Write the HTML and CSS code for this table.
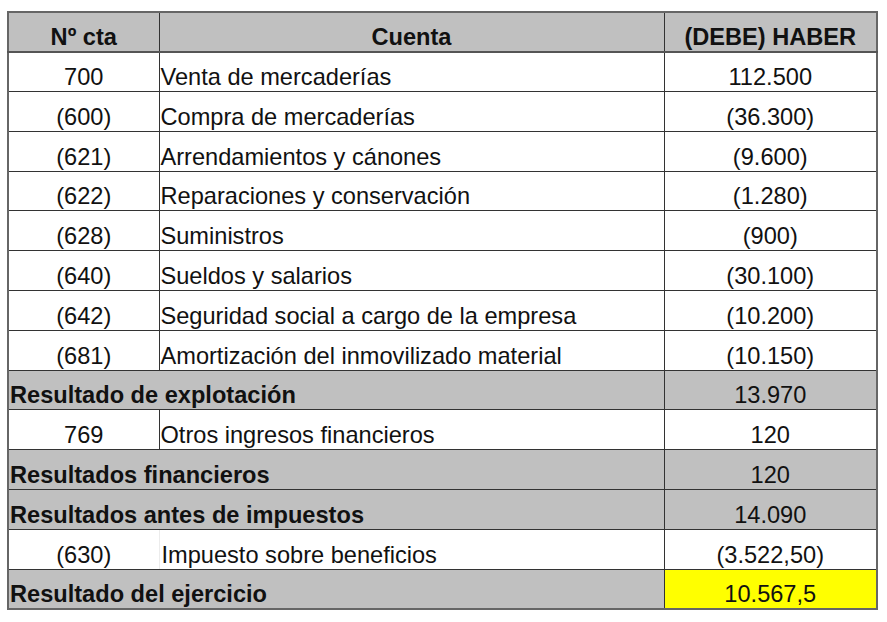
FILE: index.html
```html
<!DOCTYPE html>
<html lang="es">
<head>
<meta charset="utf-8">
<title>Cuenta de resultados</title>
<link rel="stylesheet" href="styles.css">
</head>
<body>
<table class="pyg">
  <colgroup>
    <col class="c-num">
    <col class="c-name">
    <col class="c-val">
  </colgroup>
  <thead>
    <tr class="head">
      <th>Nº cta</th>
      <th>Cuenta</th>
      <th>(DEBE) HABER</th>
    </tr>
  </thead>
  <tbody>
    <tr><td class="num">700</td><td class="name">Venta de mercaderías</td><td class="val">112.500</td></tr>
    <tr><td class="num">(600)</td><td class="name">Compra de mercaderías</td><td class="val">(36.300)</td></tr>
    <tr><td class="num">(621)</td><td class="name">Arrendamientos y cánones</td><td class="val">(9.600)</td></tr>
    <tr><td class="num">(622)</td><td class="name">Reparaciones y conservación</td><td class="val">(1.280)</td></tr>
    <tr><td class="num">(628)</td><td class="name">Suministros</td><td class="val">(900)</td></tr>
    <tr><td class="num">(640)</td><td class="name">Sueldos y salarios</td><td class="val">(30.100)</td></tr>
    <tr><td class="num">(642)</td><td class="name">Seguridad social a cargo de la empresa</td><td class="val">(10.200)</td></tr>
    <tr><td class="num">(681)</td><td class="name">Amortización del inmovilizado material</td><td class="val">(10.150)</td></tr>
    <tr class="total"><td class="label" colspan="2">Resultado de explotación</td><td class="val">13.970</td></tr>
    <tr><td class="num">769</td><td class="name">Otros ingresos financieros</td><td class="val">120</td></tr>
    <tr class="total"><td class="label" colspan="2">Resultados financieros</td><td class="val">120</td></tr>
    <tr class="total"><td class="label" colspan="2">Resultados antes de impuestos</td><td class="val">14.090</td></tr>
    <tr class="open"><td class="num">(630)</td><td class="name">Impuesto sobre beneficios</td><td class="val">(3.522,50)</td></tr>
    <tr class="total"><td class="label" colspan="2">Resultado del ejercicio</td><td class="val highlight">10.567,5</td></tr>
  </tbody>
</table>
</body>
</html>
```

FILE: styles.css
```css
html, body {
  margin: 0;
  padding: 0;
  background: #ffffff;
}

body {
  padding: 11px 0 0 7px;
  font-family: "Liberation Sans", Arial, sans-serif;
  color: #111111;
}

.pyg {
  border-collapse: collapse;
  table-layout: fixed;
  width: 869px;
  border: 2px solid #666666;
  font-size: 23.6px;
  line-height: 26px;
}

.c-num { width: 151px; }
.c-name { width: 505px; }
.c-val { width: 213px; }

.pyg th,
.pyg td {
  border: 1px solid #333333;
  height: 39.8px;
  box-sizing: border-box;
  padding: 0 1px 1px 1px;
  vertical-align: bottom;
  white-space: nowrap;
  overflow: hidden;
}

.head th {
  background: #c0c0c0;
  font-weight: bold;
  text-align: center;
  border-bottom: 2px solid #555555;
}

.num {
  text-align: center;
}

.name {
  text-align: left;
  padding-left: 1px;
}

.val {
  text-align: center;
}

.total td {
  background: #c0c0c0;
}

.total .label {
  font-weight: bold;
  text-align: left;
  padding-left: 1px;
}

.open .num {
  border-right-color: #ececec;
}

.open .name {
  border-left-color: #ececec;
  padding-left: 2px;
}

.highlight {
  background: #ffff00 !important;
}
```
